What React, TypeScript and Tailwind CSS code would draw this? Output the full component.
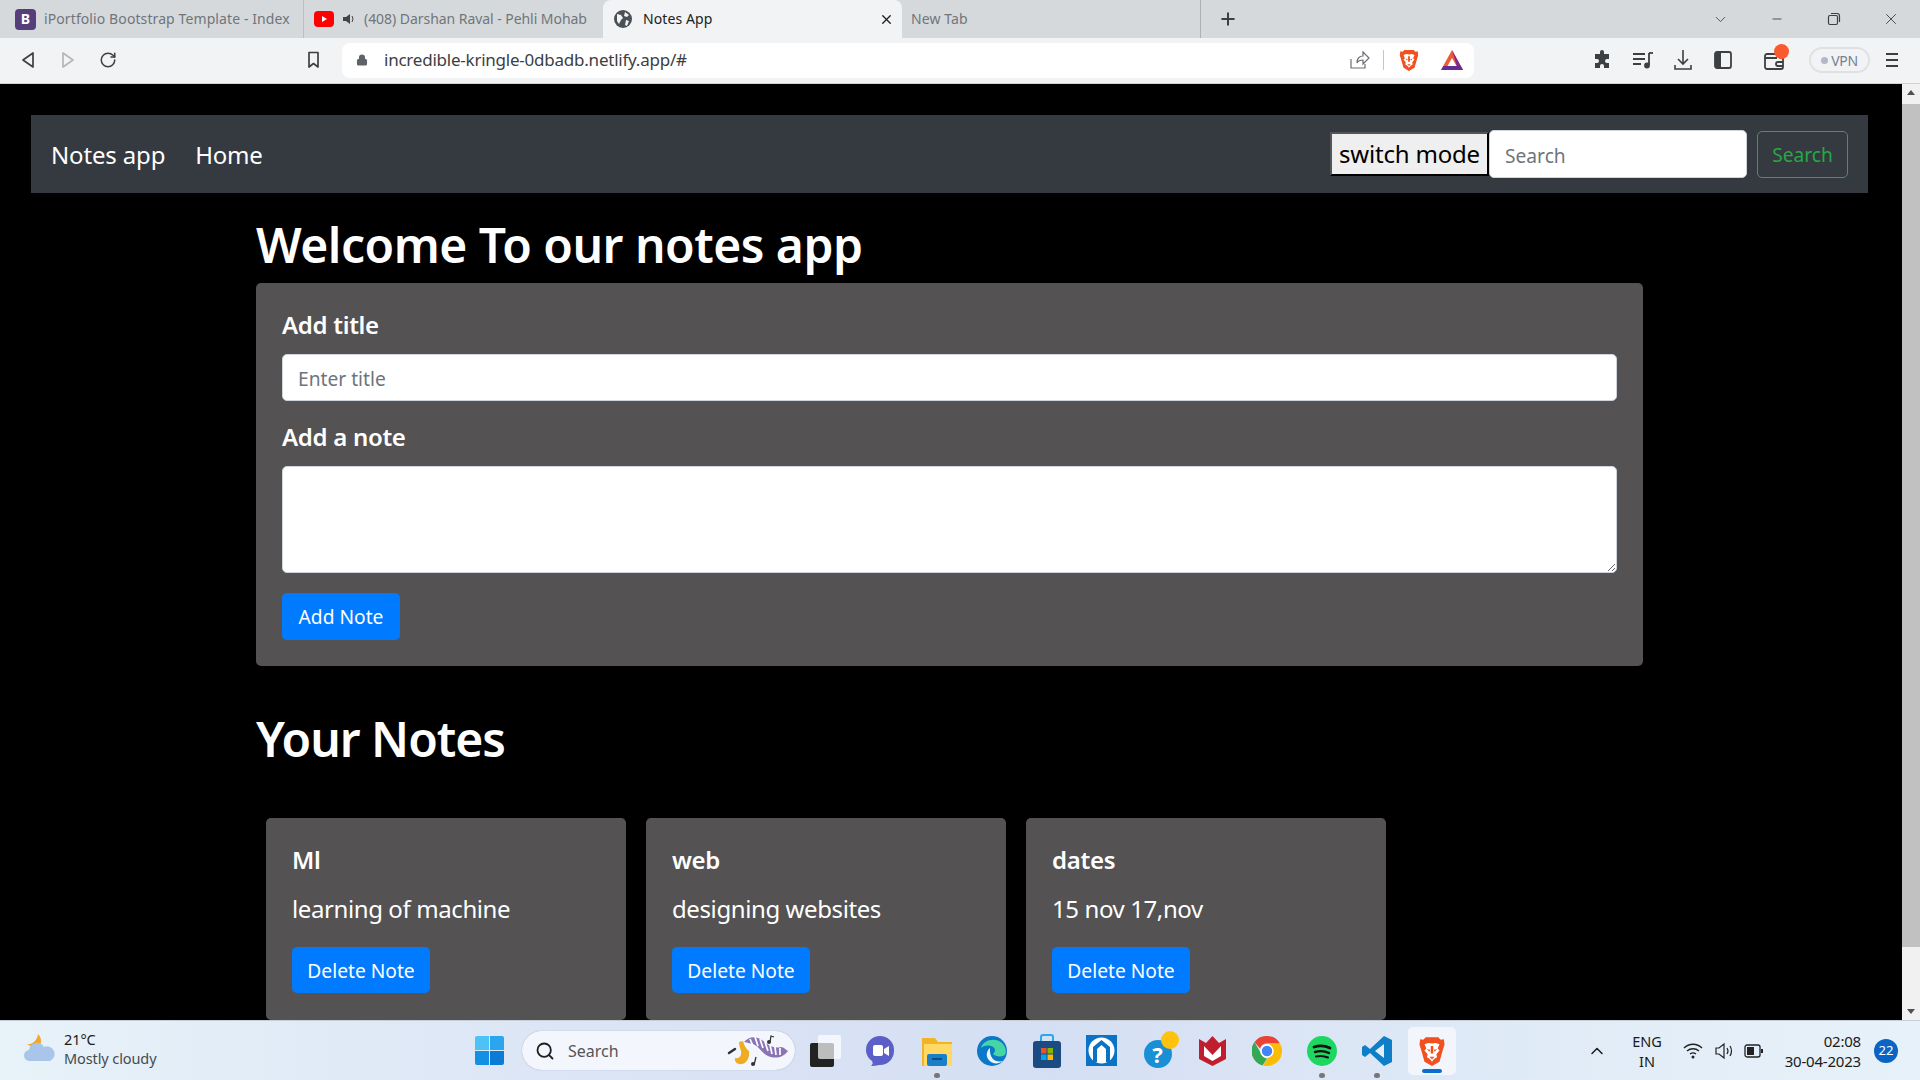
import React from "react";
import { ChevronDown, ChevronUp, Lock, Minus, Plus, RotateCw, Search, X } from "lucide-react";

const notes = [
  { id: 1, title: "Ml", text: "learning of machine" },
  { id: 2, title: "web", text: "designing websites" },
  { id: 3, title: "dates", text: "15 nov 17,nov" },
];

function BraveIcon({ size = 24 }: { size?: number }) {
  return (
    <svg width={size} height={size} viewBox="0 0 24 24">
      <path d="M7 1h10l2 2 2.500-.5L22 7l-1 3-3 10.500L12 24l-6-3.500L3 10 2 7l.5-4.500L5 3z" fill="#f1501f" />
      <path d="M12 6l-3-.5-3 1 1.500 3.500-1.500 1.500 2.500 3-.5 2.500 2.500 1.500L12 20.500l1.500-2 2.500-1.500-.5-2.500 2.500-3-1.500-1.500L18 6.500l-3-1z" fill="#fff" />
      <path d="M8 10.500l2.500.5-.5 1.500zM16 10.500l-2.500.5.5 1.500zM11 8h2v6h-2zM10 16.500h4l-2 2z" fill="#f1501f" />
    </svg>
  );
}

function GlobeIcon() {
  return (
    <svg width="18" height="18" viewBox="0 0 18 18">
      <circle cx="9" cy="9" r="9" fill="#4b5056" />
      <path d="M3 4l4 1 2 3-2 2-2 4-2-3zM11 2l4 3-2 2-3-1zM12 10l3 1-2 5-2-1z" fill="#f1f3f4" />
    </svg>
  );
}

function TabBar() {
  return (
    <div className="flex h-[38px] items-start bg-[#d6d9dc] pb-[2px] text-[14px] leading-[36px] tracking-[0.1px] text-[#70757a]">
      <div className="flex h-[38px] w-[304px] shrink-0 items-center border-r border-[#bcc0c4] pl-[15px]">
        <span className="mr-[8px] flex h-[21px] w-[21px] items-center justify-center rounded-[4px] bg-[#563d7c] text-[14px] font-bold leading-none text-white">B</span>
        <span>iPortfolio Bootstrap Template - Index</span>
      </div>
      <div className="flex h-[38px] w-[299px] shrink-0 items-center pl-[10px]">
        <svg width="20" height="16" viewBox="0 0 20 16" className="shrink-0">
          <rect width="20" height="16" rx="4" fill="#f00" />
          <path d="M8 5l5 3-5 3z" fill="#fff" />
        </svg>
        <svg width="14" height="12" viewBox="0 0 14 12" className="ml-[8px] shrink-0">
          <path d="M1 4h3l4-3v10L4 8H1z" fill="#444" />
          <path d="M10 3q2 3 0 6" stroke="#444" fill="none" />
        </svg>
        <span className="ml-[8px] whitespace-nowrap tracking-[-0.05px]">(408) Darshan Raval - Pehli Mohab</span>
      </div>
      <div className="flex h-[38px] w-[299px] shrink-0 items-center rounded-t-[8px] bg-[#f1f3f4] pl-[11px] pr-[8px] text-[#202124]">
        <GlobeIcon />
        <span className="ml-[11px] flex-1">Notes App</span>
        <X size={15} strokeWidth={2.2} />
      </div>
      <div className="flex h-[38px] w-[299px] shrink-0 items-center border-r border-[#aeb2b6] pl-[9px]">
        <span>New Tab</span>
      </div>
      <Plus size={20} strokeWidth={2.4} className="ml-[17px] mt-[9px] text-[#3c4043]" />
      <div className="ml-auto flex h-[38px] items-center text-[#3c4043]">
        <ChevronDown size={17} strokeWidth={1.2} />
        <Minus size={14} strokeWidth={1.5} className="ml-[41px]" />
        <svg width="14" height="14" viewBox="0 0 14 14" className="ml-[43px]" fill="none" stroke="#3c4043" strokeWidth="1.2">
          <rect x="1.500" y="3.500" width="9" height="9" rx="1.500" />
          <path d="M4 1.500h6a2.500 2.500 0 0 1 2.500 2.500v6" />
        </svg>
        <X size={18} strokeWidth={1.2} className="ml-[41px] mr-[20px]" />
      </div>
    </div>
  );
}

function ToolBar() {
  return (
    <div className="flex h-[46px] items-center border-b border-[#d0d2d4] bg-[#f1f3f4] pb-[1px] pl-[21px] text-[#3c4043]">
      <svg width="14" height="18" viewBox="0 0 14 18" fill="none" stroke="#3c4043" strokeWidth="1.700">
        <path d="M12 2v14L2 9z" strokeLinejoin="round" />
      </svg>
      <svg width="14" height="18" viewBox="0 0 14 18" fill="none" stroke="#b4b7ba" strokeWidth="1.700" className="ml-[26px]">
        <path d="M2 2v14l10-7z" strokeLinejoin="round" />
      </svg>
      <RotateCw size={18} strokeWidth={2} className="ml-[24px]" />
      <svg width="13" height="18" viewBox="0 0 13 18" fill="none" stroke="#3c4043" strokeWidth="1.700" className="ml-[190px]">
        <path d="M2 1.500h9v14.500l-4.500-3.500L2 16z" strokeLinejoin="round" />
      </svg>
      <div className="ml-[22px] flex h-[35px] w-[1132px] items-center rounded-[8px] bg-white pl-[14px] pr-[10px]">
        <Lock size={12} fill="#5f6368" strokeWidth={2.2} className="text-[#5f6368]" />
        <span className="ml-[16px] text-[17px] tracking-[-0.23px] text-[#3c4043]">incredible-kringle-0dbadb.netlify.app/#</span>
        <svg width="22" height="22" viewBox="0 0 22 22" fill="none" stroke="#6b6f73" strokeWidth="1.200" className="ml-auto">
          <path d="M3 10v9h14v-4M9 14c0-5 3-7 6-7V3l6 6-6 6v-4c-3 0-5 1-6 3z" />
        </svg>
        <div className="ml-[13px] h-[20px] w-px bg-[#c4c6c8]" />
        <div className="ml-[14px]"><BraveIcon size={22} /></div>
        <svg width="24" height="22" viewBox="0 0 24 22" className="ml-[20px]">
          <path d="M12 1l11 20H1z" fill="#ef5a35" />
          <path d="M12 1l11 20h-5z" fill="#7d2a8c" />
          <path d="M12 9l4.500 8h-9z" fill="#fff" />
          <path d="M1 21l2.500-4h17l2.500 4z" fill="#662d91" />
        </svg>
      </div>
      <svg width="20" height="20" viewBox="0 0 20 20" fill="#3c4043" className="ml-[119px]">
        <path d="M7 2a2 2 0 0 1 4 0v2h5v5h-2a2 2 0 0 0 0 4h2v5h-5v-2a2 2 0 0 0-4 0v2H2v-5h2a2 2 0 0 0 0-4H2V4h5z" />
      </svg>
      <svg width="22" height="20" viewBox="0 0 22 20" fill="none" stroke="#3c4043" strokeWidth="1.800" className="ml-[19px]">
        <path d="M1 4h12M1 9h12M1 14h8M17 3v12" />
        <circle cx="15" cy="15.500" r="2" fill="#3c4043" />
        <path d="M17 3h4" />
      </svg>
      <svg width="20" height="22" viewBox="0 0 20 22" fill="none" stroke="#3c4043" strokeWidth="1.600" className="ml-[19px]">
        <path d="M10 1v14M5 10l5 5 5-5M2 16v4h16v-4" />
      </svg>
      <svg width="18" height="18" viewBox="0 0 18 18" className="ml-[21px]">
        <rect x="1" y="1" width="16" height="16" rx="2" fill="none" stroke="#3c4043" strokeWidth="1.800" />
        <rect x="1" y="1" width="6" height="16" fill="#3c4043" />
      </svg>
      <div className="relative ml-[32px] h-[20px] w-[22px]">
        <svg width="20" height="18" viewBox="0 0 20 18" fill="none" stroke="#3c4043" strokeWidth="1.800" className="absolute bottom-0 left-0">
          <rect x="1" y="2" width="18" height="15" rx="2" />
          <path d="M1 6h12M19 10h-5a2 2 0 0 0 0 4h5" />
        </svg>
        <div className="absolute right-[-3px] top-[-6px] h-[15px] w-[15px] rounded-full bg-[#fa5a2d]" />
      </div>
      <div className="ml-[23px] flex h-[26px] w-[61px] items-center justify-center rounded-full border-2 border-[#dfe1e3] text-[14px] tracking-[-0.4px] text-[#7a7e91]">
        <span className="mr-[3px] h-[7px] w-[7px] rounded-full bg-[#b4b7c9]" />
        VPN
      </div>
      <div className="ml-[16px] flex w-[12px] flex-col gap-[4px]">
        <div className="h-[2px] bg-[#3c4043]" />
        <div className="h-[2px] bg-[#3c4043]" />
        <div className="h-[2px] bg-[#3c4043]" />
      </div>
    </div>
  );
}

function NoteCard({ title, text }: { title: string; text: string }) {
  return (
    <div className="h-[202px] w-[360px] shrink-0 rounded-[5px] bg-[#545253] px-[26px] pt-[28px] text-white">
      <h5 className="h-[29px] text-[24px] font-semibold leading-[27px] tracking-[-0.3px]">{title}</h5>
      <p className="mt-[20px] h-[29px] text-[24px] leading-[27px] tracking-[-0.4px]">{text}</p>
      <button className="mt-[23px] h-[46px] w-[138px] rounded-[5px] bg-[#007bff] pt-[2px] text-[19.200px] text-white">Delete Note</button>
    </div>
  );
}

function Page() {
  return (
    <div className="min-w-0 flex-1 overflow-hidden pt-[31px]">
      <nav className="ml-[31px] flex h-[78px] w-[1837px] items-center bg-[#343a40] px-[20px]">
        <span className="pt-[2px] text-[24px] tracking-[-0.15px] text-white">Notes app</span>
        <span className="ml-[30px] pt-[2px] text-[24px] tracking-[-0.3px] text-white">Home</span>
        <button className="ml-auto h-[44px] w-[159px] border-2 border-b-black border-l-[#555] border-r-black border-t-[#555] bg-[#efefef] text-[24px] leading-none tracking-[-0.2px] text-black">switch mode</button>
        <input placeholder="Search" className="h-[48px] w-[258px] rounded-[5px] border border-[#ced4da] bg-white px-[15px] pt-[2px] text-[19.200px] outline-none placeholder:text-[#6c757d]" />
        <button className="ml-[10px] h-[47px] w-[91px] rounded-[5px] border border-[#28a745] pt-[2px] text-[19.200px] text-[#28a745]">Search</button>
      </nav>
      <main className="ml-[256px] w-[1387px]">
        <h1 className="mt-[23px] h-[58px] text-[48px] font-semibold leading-[57px] tracking-[-0.5px] text-white">Welcome To our notes app</h1>
        <form className="mt-[9px] h-[383px] rounded-[5px] bg-[#545253] px-[26px] pt-[28px] text-white">
          <label className="block h-[29px] text-[24px] font-semibold leading-[27px] tracking-[-0.3px]">Add title</label>
          <input placeholder="Enter title" className="mt-[14px] block h-[47px] w-full rounded-[5px] border border-[#ced4da] bg-white px-[15px] pt-[2px] text-[19.200px] outline-none placeholder:text-[#6c757d]" />
          <label className="mt-[22px] block h-[29px] text-[24px] font-semibold leading-[27px] tracking-[-0.3px]">Add a note</label>
          <textarea className="mt-[14px] block h-[107px] w-full resize-y rounded-[5px] border border-[#ced4da] bg-white px-[15px] outline-none" />
          <button type="button" className="mt-[20px] h-[47px] w-[118px] rounded-[5px] bg-[#007bff] pt-[2px] text-[19.200px] text-white">Add Note</button>
        </form>
        <h2 className="mt-[44px] h-[58px] text-[48px] font-semibold leading-[57px] tracking-[-1px] text-white">Your Notes</h2>
        <div className="ml-[10px] mt-[50px] flex gap-[20px]">
          {notes.map((note) => (
            <NoteCard key={note.id} title={note.title} text={note.text} />
          ))}
        </div>
      </main>
    </div>
  );
}

function ScrollBar() {
  return (
    <div className="flex w-[18px] shrink-0 flex-col items-center bg-[#f1f1f1]">
      <svg width="8" height="5" viewBox="0 0 8 5" className="mt-[6px] shrink-0"><path d="M4 0l4 5H0z" fill="#505050" /></svg>
      <div className="mt-[9px] h-[843px] w-full bg-[#c1c1c1]" />
      <div className="flex-1" />
      <svg width="8" height="5" viewBox="0 0 8 5" className="mb-[6px] shrink-0"><path d="M4 5l4-5H0z" fill="#505050" /></svg>
    </div>
  );
}

function TaskIcon({ left, children }: { left: string; children: React.ReactNode }) {
  return <div className={`relative flex h-full w-[45px] shrink-0 items-center justify-center ${left}`}>{children}</div>;
}

function RunDot() {
  return <div className="absolute bottom-[2px] left-[20px] h-[5px] w-[6px] rounded-full bg-[#777]" />;
}

function TaskBar() {
  return (
    <div className="flex h-[60px] items-center border-t border-[#c8ced6] bg-[linear-gradient(90deg,#e8f2f9_0%,#dbe5f5_30%,#d5dff3_55%,#e2edf8_85%,#e6f1f9_100%)] text-[#1b1b1b]">
      {/* weather */}
      <svg width="32" height="34" viewBox="0 0 32 34" className="mb-[4px] ml-[24px] shrink-0">
        <path d="M14 2c3 3 4 7 2 11-4 3-9 2-13-1 5 1 10-3 11-10z" fill="#f5a623" />
        <path d="M6 29a5.500 5.500 0 0 1-1-11 8 8 0 0 1 15-3 7 7 0 0 1 6 14z" fill="#a9c6ea" />
      </svg>
      <div className="ml-[8px] w-[130px] shrink-0 pb-[3px] text-[14.500px] leading-[19px] tracking-[-0.1px]">
        <div>21°C</div>
        <div className="text-[#454a50]">Mostly cloudy</div>
      </div>
      {/* start */}
      <div className="ml-[281px] grid h-[29px] w-[29px] shrink-0 grid-cols-2 gap-[1px]">
        <div className="rounded-tl-[2px] bg-[#4cc2f5]" />
        <div className="rounded-tr-[2px] bg-[#2aa5ee]" />
        <div className="rounded-bl-[2px] bg-[#1490e2]" />
        <div className="rounded-br-[2px] bg-[#0b7bd6]" />
      </div>
      <div className="ml-[18px] flex h-[39px] w-[273px] shrink-0 items-center rounded-full bg-[#f3f6fd] pl-[13px] pr-[3px] shadow-[0_0_1px_#8a93a8]">
        <Search size={20} strokeWidth={2.2} className="text-[#1f1f1f]" />
        <span className="ml-[13px] text-[16px] text-[#555]">Search</span>
        <svg width="66" height="34" viewBox="0 0 66 34" className="ml-auto">
          <path d="M13 8l4-1c1 4 3 8 6 10 1 6-2 12-7 13-5 1-8-3-7-6 4 1 7-2 6-7-1-3-2-6-2-9z" fill="#eeac22" />
          <path d="M18 8c5-6 12-6 18-2 6 5 12 9 19 7 3 0 5 3 7 4-5 7-13 8-20 5-6-3-8-8-13-11-4-2-7-2-11-3z" fill="#8a74b5" />
          <path d="M24 5l3 7M29 3l3 9M34 5l3 9M39 8l3 9M44 11l2 9M49 13l1 8M54 14l0 7" stroke="#fff" strokeWidth="1.700" />
          <path d="M3 19l6-4" stroke="#333" strokeWidth="2.500" strokeLinecap="round" />
          <circle cx="27" cy="30" r="2" fill="#333" /><path d="M28 31l2-8" stroke="#333" strokeWidth="1.300" />
          <circle cx="43" cy="8" r="2" fill="#333" /><path d="M44 8l1-6 3 1" stroke="#333" strokeWidth="1.300" fill="none" />
        </svg>
      </div>
      <div className="relative ml-[15px] h-[32px] w-[32px] shrink-0">
        <div className="absolute bottom-0 left-0 h-[24px] w-[24px] rounded-[2px] bg-[#222]" />
        <div className="absolute right-[1px] top-0 h-[24px] w-[23px] rounded-[2px] bg-white/70" />
      </div>
      <svg width="30" height="32" viewBox="0 0 30 32" className="ml-[23px] shrink-0">
        <path d="M15 1a14 14 0 0 1 14 14v1a14 14 0 0 1-14 14c-2 0-4 1-9 1 2-2 2-3 1-5A14 14 0 0 1 1 16v-1A14 14 0 0 1 15 1z" fill="#5b5fc7" />
        <rect x="8" y="10" width="10" height="11" rx="2" fill="#fff" />
        <path d="M19 14l5-3v10l-5-3z" fill="#fff" />
      </svg>
      {/* pinned apps */}
      <TaskIcon left="ml-[19px]">
        <svg width="30" height="30" viewBox="0 0 30 30">
          <path d="M0 2h13l3 4h14v24H0z" fill="#f0b429" />
          <path d="M2 8h28v22H2z" fill="#ffd964" />
          <rect x="5" y="18" width="20" height="12" rx="2" fill="#1a7fc9" />
          <rect x="10" y="22" width="10" height="2" fill="#0f4c81" />
        </svg>
        <RunDot />
      </TaskIcon>
      <TaskIcon left="ml-[10px]">
        <svg width="30" height="30" viewBox="0 0 30 30">
          <circle cx="15" cy="15" r="15" fill="#0c78c8" />
          <path d="M4 12C6 4 18 1 25 7c5 5 5 12 1 13-4 1-8 0-10-2 3-2 3-7-2-8-4-1-8 0-10 2z" fill="#45d6a4" />
          <path d="M13 12c-4 3-5 10 1 14 3 2 8 2 12-1-7 2-14-2-13-13z" fill="#e9f6ff" />
        </svg>
      </TaskIcon>
      <TaskIcon left="ml-[10px]">
        <svg width="30" height="34" viewBox="0 0 30 34">
          <path d="M9 8V3a2 2 0 0 1 2-2h8a2 2 0 0 1 2 2v5" fill="none" stroke="#28a8ea" strokeWidth="2" />
          <rect x="1" y="7" width="28" height="27" rx="3" fill="#1b4b83" />
          <rect x="9" y="14" width="5.500" height="5.500" fill="#f25022" />
          <rect x="15.500" y="14" width="5.500" height="5.500" fill="#7fba00" />
          <rect x="9" y="20.500" width="5.500" height="5.500" fill="#00a4ef" />
          <rect x="15.500" y="20.500" width="5.500" height="5.500" fill="#ffb900" />
        </svg>
      </TaskIcon>
      <TaskIcon left="ml-[10px]">
        <svg width="31" height="31" viewBox="0 0 31 31">
          <rect width="31" height="31" fill="#0a72c7" />
          <circle cx="15.500" cy="15.500" r="13" fill="#fff" />
          <path d="M15.500 5L24 12v15h-4V14l-4.500-4-4.500 4v13H7V12z" fill="#0a72c7" />
        </svg>
      </TaskIcon>
      <TaskIcon left="ml-[12px]">
        <div className="relative h-[34px] w-[34px]">
          <div className="absolute bottom-0 left-[2px] flex h-[28px] w-[28px] items-center justify-center rounded-full bg-[#1a8fd6] text-[22px] font-bold leading-none text-white">?</div>
          <div className="absolute right-[-3px] top-[-3px] h-[18px] w-[18px] rounded-full bg-[#ffc20e]" />
        </div>
      </TaskIcon>
      <TaskIcon left="ml-[9px]">
        <svg width="27" height="30" viewBox="0 0 27 30">
          <path d="M0 3l7 4 6.500-7L20 7l7-4v20l-13.500 7L0 23z" fill="#c01e2e" />
          <path d="M5 10l8.500 9 8.500-9v10l-8.500 5L5 20z" fill="#fff" />
        </svg>
      </TaskIcon>
      <TaskIcon left="ml-[9px]">
        <svg width="30" height="30" viewBox="0 0 30 30">
          <path d="M15 0a15 15 0 0 1 13 7.500H15a7.500 7.500 0 0 0-7 5L2.500 6A15 15 0 0 1 15 0z" fill="#ea4335" />
          <path d="M2.500 6L9 17.500a7.500 7.500 0 0 0 6 5l-4.500 7A15 15 0 0 1 2.500 6z" fill="#34a853" />
          <path d="M28 7.500A15 15 0 0 1 11 29.500l6-10a7.500 7.500 0 0 0 0-12z" fill="#fbbc05" />
          <circle cx="15" cy="15" r="6" fill="#4285f4" stroke="#fff" strokeWidth="1.500" />
        </svg>
      </TaskIcon>
      <TaskIcon left="ml-[10px]">
        <svg width="30" height="30" viewBox="0 0 30 30" fill="none" stroke="#111" strokeLinecap="round">
          <circle cx="15" cy="15" r="15" fill="#1ed760" stroke="none" />
          <path d="M7 11c6-2 11-1.500 16 1" strokeWidth="2.800" />
          <path d="M8 16c5-1.500 10-1 14 1" strokeWidth="2.400" />
          <path d="M9 20.500c4-1 8-.8 12 1" strokeWidth="2" />
        </svg>
        <RunDot />
      </TaskIcon>
      <TaskIcon left="ml-[10px]">
        <svg width="30" height="30" viewBox="0 0 30 30">
          <path d="M22 0l8 4v22l-8 4-14-13-5 4-3-2V11l3-2 5 4z" fill="#0f7ec9" />
          <path d="M22 8L13 15l9 7z" fill="#e3eef9" />
        </svg>
        <RunDot />
      </TaskIcon>
      <div className="relative ml-[9px] flex h-[48px] w-[48px] shrink-0 items-center justify-center rounded-[5px] bg-[#f2f5fb]">
        <BraveIcon size={30} />
        <div className="absolute bottom-[2px] left-[14px] h-[4px] w-[20px] rounded-full bg-[#0b6fd0]" />
      </div>
      {/* tray */}
      <ChevronUp size={20} strokeWidth={1.800} className="ml-[131px] shrink-0" />
      <div className="ml-[22px] w-[36px] shrink-0 text-center text-[14.500px] leading-[20px]">
        <div>ENG</div>
        <div>IN</div>
      </div>
      <svg width="20" height="18" viewBox="0 0 20 18" fill="none" stroke="#222" strokeWidth="1.400" className="ml-[18px] shrink-0">
        <path d="M1 6c5-5 13-5 18 0M4 9c3.500-3 8.500-3 12 0M7 12c2-1.500 4-1.500 6 0" />
        <circle cx="10" cy="15" r="1.500" fill="#222" stroke="none" />
      </svg>
      <svg width="20" height="18" viewBox="0 0 20 18" fill="none" stroke="#222" strokeWidth="1.200" className="ml-[12px] shrink-0">
        <path d="M1 6h3l5-4v14l-5-4H1z" />
        <path d="M12 6q2 3 0 6M15 4q3 5 0 10" />
      </svg>
      <svg width="20" height="14" viewBox="0 0 20 14" className="ml-[9px] shrink-0">
        <rect x="1" y="1" width="15" height="12" rx="2" fill="none" stroke="#222" strokeWidth="1.300" />
        <rect x="3" y="3" width="7" height="8" fill="#222" />
        <rect x="17" y="5" width="2" height="4" fill="#222" />
      </svg>
      <div className="ml-[7px] w-[90px] shrink-0 text-right text-[15px] leading-[20px] tracking-[-0.2px]">
        <div>02:08</div>
        <div>30-04-2023</div>
      </div>
      <div className="ml-[13px] flex h-[24px] w-[24px] shrink-0 items-center justify-center rounded-full bg-[#0b63c4] text-[13px] text-white">22</div>
    </div>
  );
}

export default function App() {
  return (
    <div className="flex h-screen flex-col overflow-hidden bg-black [font-family:'Noto_Sans',sans-serif]">
      <TabBar />
      <ToolBar />
      <div className="flex min-h-0 flex-1">
        <Page />
        <ScrollBar />
      </div>
      <TaskBar />
    </div>
  );
}
